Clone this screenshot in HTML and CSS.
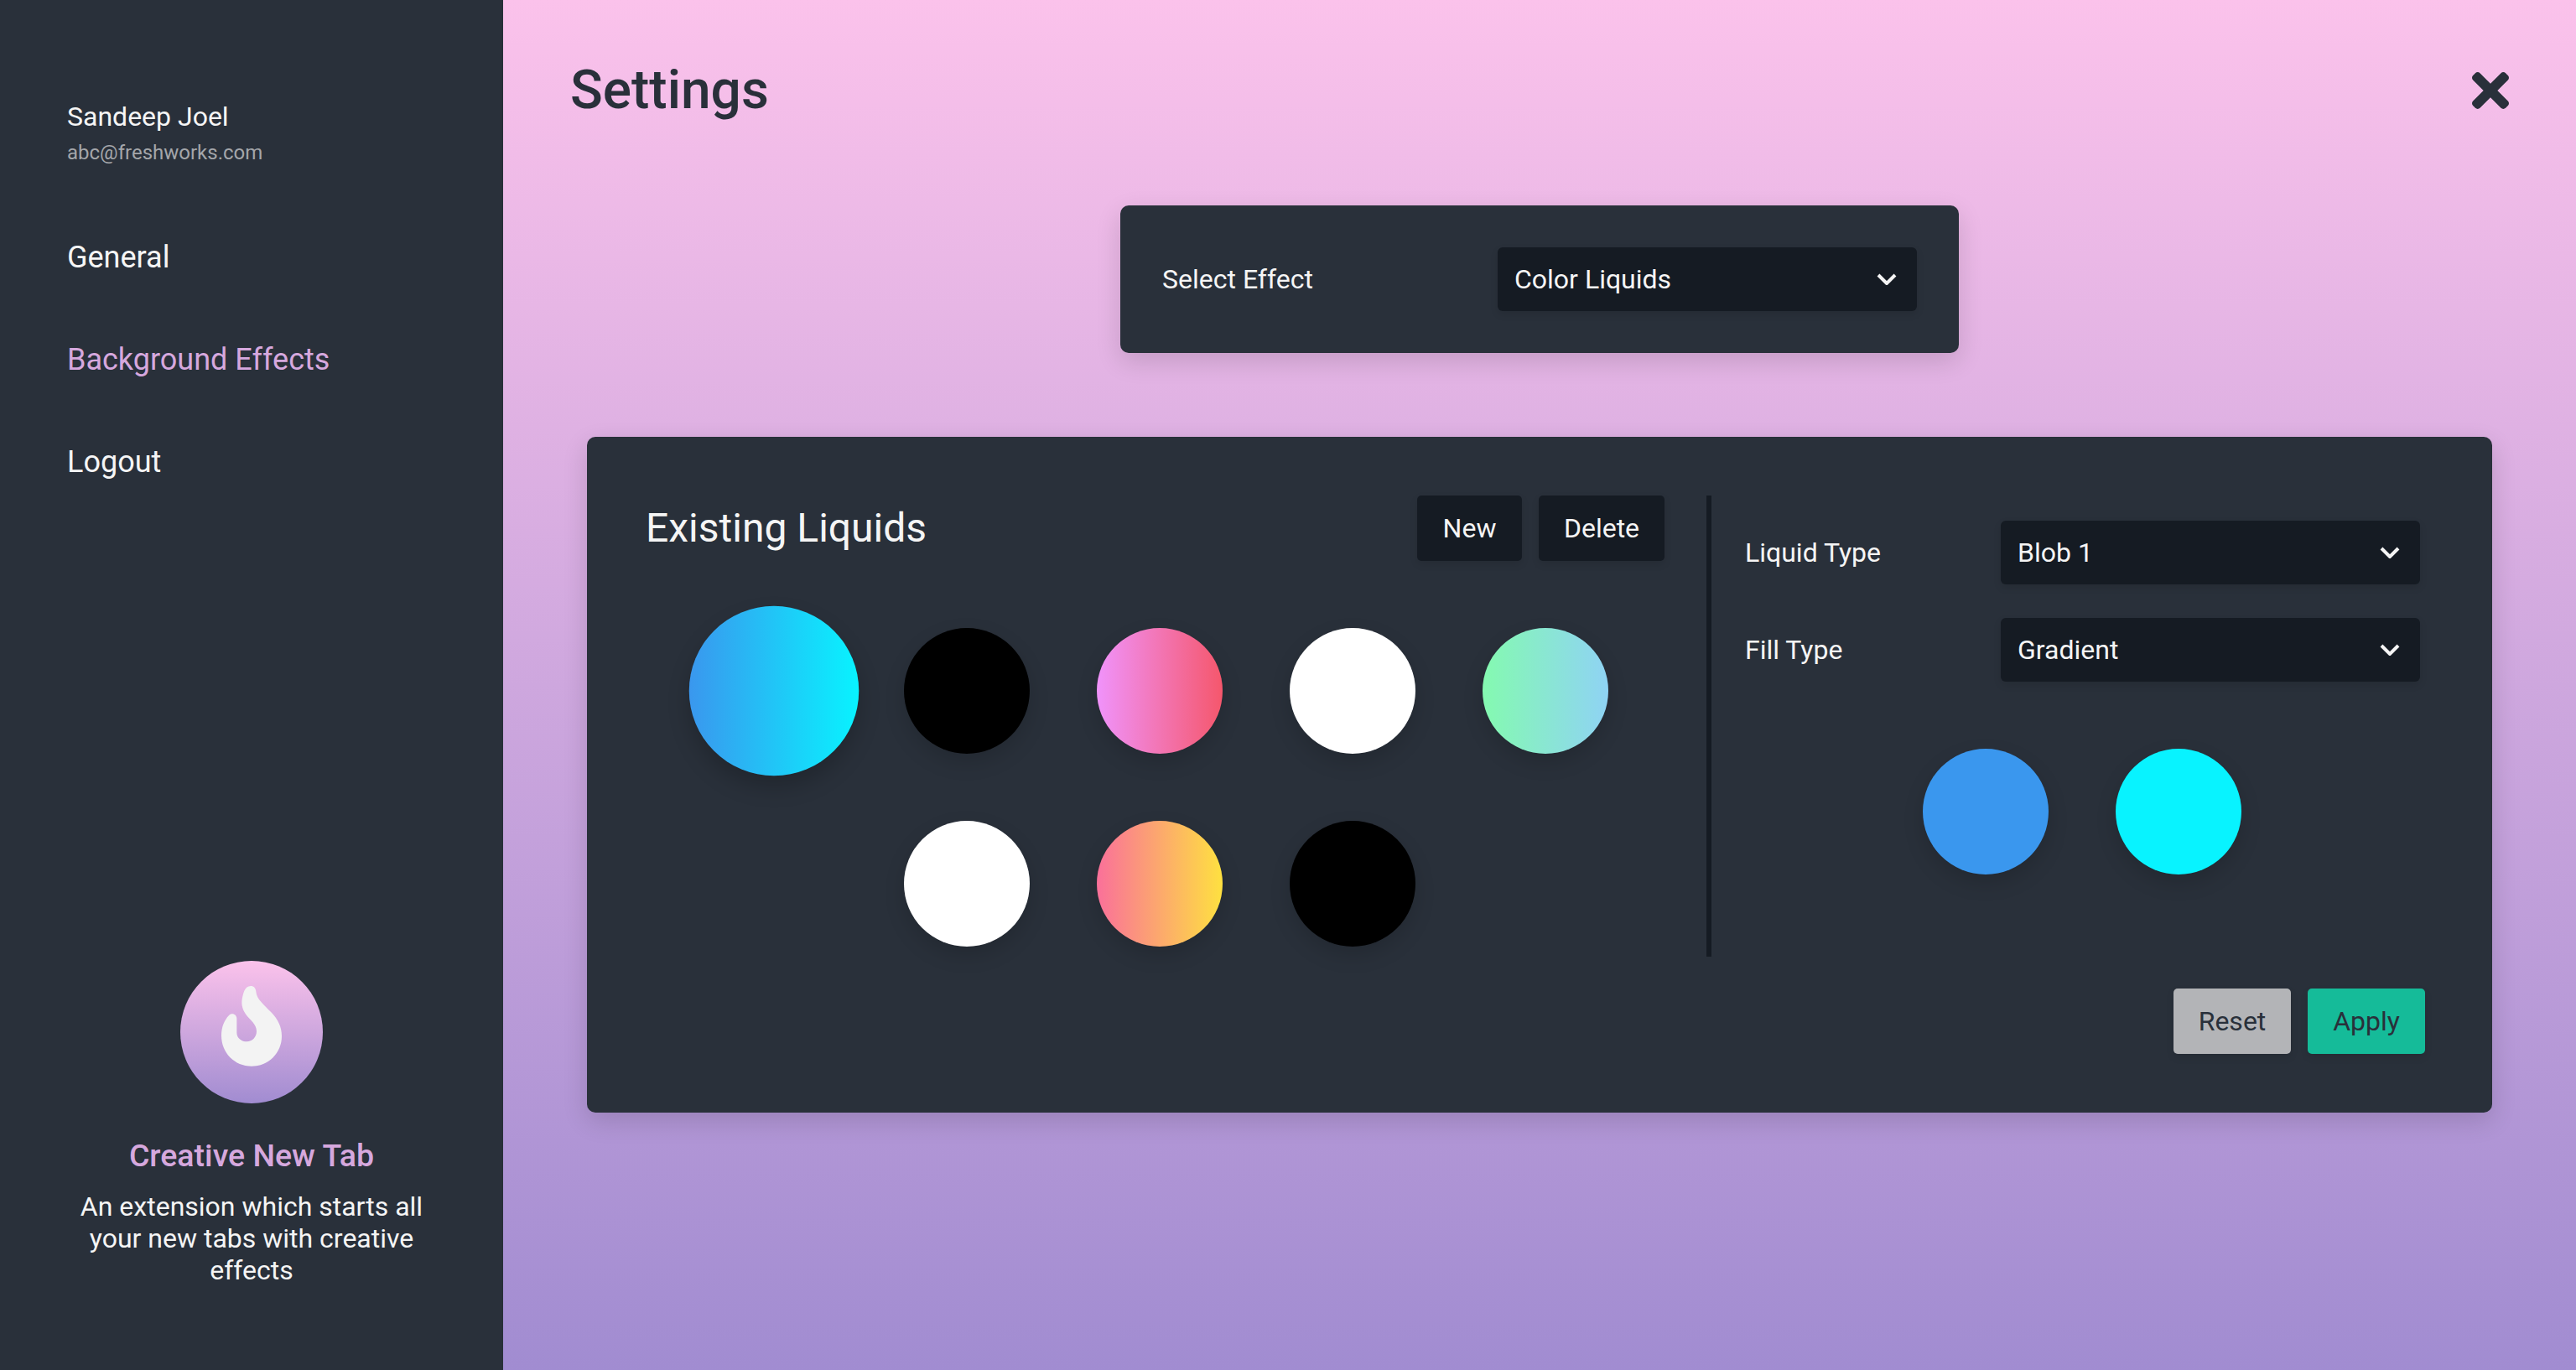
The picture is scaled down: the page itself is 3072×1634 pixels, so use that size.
FILE: index.html
```html
<!DOCTYPE html>
<html lang="en">
<head>
    <meta charset="UTF-8">
    <title>Settings</title>
    <link rel="stylesheet" href="styles.css">
</head>
<body>
    <aside class="sidebar">
        <div class="sidebar-top">
            <div class="user">
                <div class="user-name">Sandeep Joel</div>
                <div class="user-email">abc@freshworks.com</div>
            </div>
            <nav class="nav">
                <a class="nav-item">General</a>
                <a class="nav-item active">Background Effects</a>
                <a class="nav-item">Logout</a>
            </nav>
        </div>
        <div class="about">
            <div class="logo">
                <svg class="logo-flame" viewBox="465 78 510 510">
                    <path d="M717 168C728 168 735 176 736 188C738 215 765 235 790 262C815 288 828 315 828 347C828 408 780 455 720 455C660 455 612 408 612 345C612 315 622 290 640 272C652 262 667 270 667 285L667 335C667 355 685 367 703 367C723 367 738 350 738 330C738 305 715 290 700 270C688 252 683 235 686 215C690 195 695 168 717 168Z"/>
                </svg>
            </div>
            <div class="about-title">Creative New Tab</div>
            <p class="about-text">An extension which starts all your new tabs with creative effects</p>
        </div>
    </aside>

    <main class="main">
        <header class="header">
            <h1>Settings</h1>
            <svg class="close" viewBox="0 80 352 352">
                <path d="M242.72 256l100.07-100.07c12.28-12.28 12.28-32.19 0-44.48l-22.24-22.24c-12.28-12.28-32.19-12.28-44.48 0L176 189.28 75.93 89.21c-12.28-12.28-32.19-12.28-44.48 0L9.21 111.45c-12.28 12.28-12.28 32.19 0 44.48L109.28 256 9.21 356.07c-12.28 12.28-12.28 32.19 0 44.48l22.24 22.24c12.28 12.28 32.2 12.28 44.48 0L176 322.72l100.07 100.07c12.28 12.28 32.2 12.28 44.48 0l22.24-22.24c12.28-12.28 12.28-32.19 0-44.48L242.72 256z"/>
            </svg>
        </header>

        <section class="effect-card">
            <label class="field-label">Select Effect</label>
            <div class="select">
                <span>Color Liquids</span>
                <svg class="chevron" viewBox="0 0 24 14"><polyline points="2,2 12,12 22,2"/></svg>
            </div>
        </section>

        <section class="panel">
            <div class="panel-body">
                <div class="liquids">
                    <div class="liquids-head">
                        <h2>Existing Liquids</h2>
                        <div class="btn-group">
                            <button class="btn btn-dark btn-new">New</button>
                            <button class="btn btn-dark btn-delete">Delete</button>
                        </div>
                    </div>
                    <div class="liquid-list">
                        <div class="circle selected grad-blue"></div>
                        <div class="circle black"></div>
                        <div class="circle grad-pink"></div>
                        <div class="circle white"></div>
                        <div class="circle grad-green"></div>
                        <div class="circle white"></div>
                        <div class="circle grad-orange"></div>
                        <div class="circle black"></div>
                    </div>
                </div>
                <div class="divider"></div>
                <div class="options">
                    <div class="option-row">
                        <label class="field-label">Liquid Type</label>
                        <div class="select">
                            <span>Blob 1</span>
                            <svg class="chevron" viewBox="0 0 24 14"><polyline points="2,2 12,12 22,2"/></svg>
                        </div>
                    </div>
                    <div class="option-row">
                        <label class="field-label">Fill Type</label>
                        <div class="select">
                            <span>Gradient</span>
                            <svg class="chevron" viewBox="0 0 24 14"><polyline points="2,2 12,12 22,2"/></svg>
                        </div>
                    </div>
                    <div class="swatches">
                        <div class="circle solid-blue"></div>
                        <div class="circle solid-cyan"></div>
                    </div>
                </div>
            </div>
            <div class="actions">
                <button class="btn btn-reset">Reset</button>
                <button class="btn btn-apply">Apply</button>
            </div>
        </section>
    </main>
</body>
</html>
```

FILE: styles.css
```css
* {
    box-sizing: border-box;
}

html,
body {
    height: 100%;
}

body {
    margin: 0;
    display: flex;
    overflow: hidden;
    font-family: Roboto, 'Liberation Sans', sans-serif;
    color: #f5f5f5;
    background-color: #29303a;
}

/* sidebar */
.sidebar {
    width: 600px;
    flex-shrink: 0;
    display: flex;
    flex-direction: column;
    justify-content: space-between;
    padding: 120px 0 100px;
    background-color: #29303a;
}

.sidebar-top {
    padding-left: 80px;
}

.user-name {
    font-size: 32px;
    line-height: 38px;
}

.user-email {
    margin-top: 10px;
    font-size: 24px;
    line-height: 28px;
    color: #a4a6aa;
}

.nav {
    display: flex;
    flex-direction: column;
    gap: 80px;
    margin-top: 90px;
}

.nav-item {
    font-size: 36px;
    line-height: 42px;
}

.nav-item.active {
    color: #d6a8de;
}

.about {
    display: flex;
    flex-direction: column;
    align-items: center;
    padding: 0 80px;
    text-align: center;
}

.logo {
    width: 170px;
    height: 170px;
    border-radius: 50%;
    background: linear-gradient(to top, #a18cd1, #fbc2eb);
}

.logo-flame {
    display: block;
    width: 170px;
    height: 170px;
    fill: #f3f3f3;
}

.about-title {
    margin-top: 41px;
    font-size: 37.5px;
    line-height: 42px;
    font-weight: 500;
    color: #d6a8de;
}

.about-text {
    margin: 21px 0 0;
    font-size: 32px;
    line-height: 38px;
}

/* main area */
.main {
    flex: 1;
    display: flex;
    flex-direction: column;
    align-items: center;
    background: linear-gradient(to top, #a18cd1, #fbc2eb);
}

.header {
    width: 100%;
    height: 216px;
    display: flex;
    justify-content: space-between;
    align-items: center;
    padding: 0 80px;
}

h1 {
    margin: 0 0 2px;
    font-size: 64px;
    font-weight: 500;
    color: #29303a;
}

.close {
    width: 44px;
    height: 44px;
    fill: #29303a;
}

.effect-card {
    width: 1000px;
    height: 176px;
    margin-top: 29px;
    display: flex;
    justify-content: space-between;
    align-items: center;
    padding: 0 50px;
    border-radius: 10px;
    background-color: #29303a;
    box-shadow: 0 10px 30px rgba(0, 0, 0, 0.14);
}

.field-label {
    font-size: 32px;
}

.select {
    width: 500px;
    height: 76px;
    display: flex;
    justify-content: space-between;
    align-items: center;
    padding: 0 24px 0 20px;
    border-radius: 6px;
    font-size: 32px;
    background-color: #151b23;
    box-shadow: 0 4px 10px rgba(0, 0, 0, 0.1);
}

.chevron {
    width: 24px;
    height: 14px;
    fill: none;
    stroke: #f5f5f5;
    stroke-width: 4;
}

.panel {
    width: 2272px;
    height: 806px;
    margin-top: 100px;
    padding: 70px 80px 70px 70px;
    border-radius: 10px;
    background-color: #29303a;
    box-shadow: 0 10px 30px rgba(0, 0, 0, 0.14);
}

.panel-body {
    display: flex;
    height: 550px;
}

.liquids {
    width: 1215px;
}

.liquids-head {
    display: flex;
    justify-content: space-between;
    align-items: center;
}

h2 {
    margin: 0 0 2px;
    font-size: 48px;
    font-weight: 400;
}

.btn-group {
    display: flex;
    gap: 20px;
}

.btn {
    height: 78px;
    padding: 0;
    border: 0;
    border-radius: 5px;
    font-family: inherit;
    font-size: 32px;
    box-shadow: 0 4px 10px rgba(0, 0, 0, 0.1);
}

.btn-dark {
    color: #f5f5f5;
    background-color: #151b23;
}

.btn-new {
    width: 125px;
}

.btn-delete {
    width: 150px;
}

.liquid-list {
    display: grid;
    grid-template-columns: repeat(5, 150px);
    gap: 80px;
    margin: 80px 0 0 78px;
}

.circle {
    width: 150px;
    height: 150px;
    border-radius: 50%;
    box-shadow: 0 10px 25px rgba(0, 0, 0, 0.15);
}

.selected {
    transform: scale(1.35);
    box-shadow: 0 10px 20px rgba(0, 0, 0, 0.2);
}

/* second row starts under the second column */
.liquid-list .circle:nth-child(6) {
    grid-column-start: 2;
}

.black {
    background-color: #000000;
}

.white {
    background-color: #ffffff;
}

.grad-blue {
    background: linear-gradient(to right, #3a97ee, #08f3ff);
}

.grad-pink {
    background: linear-gradient(to right, #f093fb, #f5576c);
}

.grad-green {
    background: linear-gradient(to right, #84fab0, #8fd3f4);
}

.grad-orange {
    background: linear-gradient(to right, #fa709a, #fee140);
}

.solid-blue {
    background-color: #3a97ee;
}

.solid-cyan {
    background-color: #08f3ff;
}

.divider {
    width: 6px;
    margin-left: 50px;
    background-color: #151b23;
}

.options {
    width: 805px;
    margin-left: 40px;
    padding-top: 30px;
}

.option-row {
    display: flex;
    justify-content: space-between;
    align-items: center;
    margin-bottom: 40px;
}

.swatches {
    display: flex;
    justify-content: center;
    gap: 80px;
    margin-top: 80px;
    padding-right: 2px;
}

.actions {
    display: flex;
    justify-content: flex-end;
    gap: 20px;
    margin-top: 38px;
}

.btn-reset,
.btn-apply {
    width: 140px;
    color: #29303a;
}

.btn-reset {
    background-color: #b3b4b7;
}

.btn-apply {
    background-color: #15bb99;
}
```
